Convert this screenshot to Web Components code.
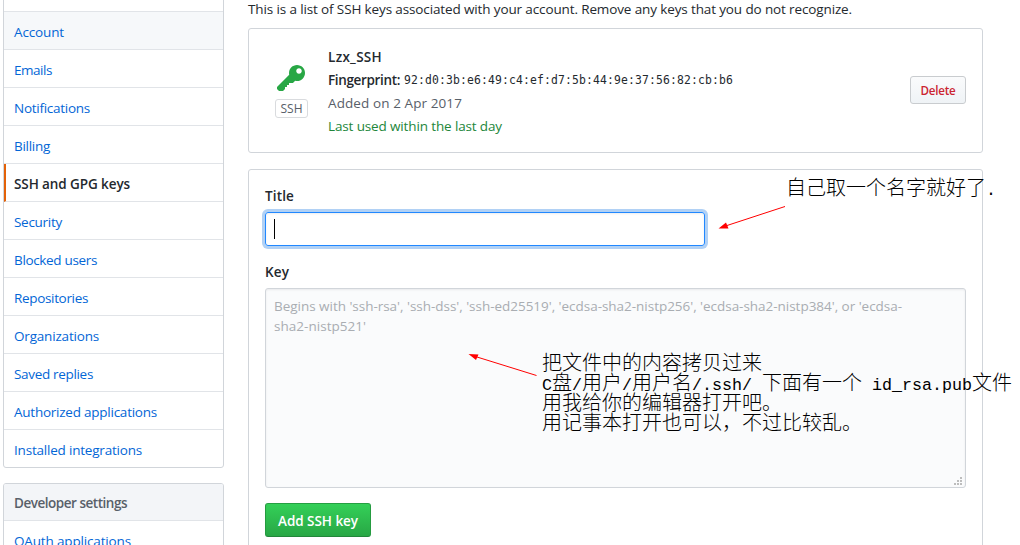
<!DOCTYPE html>
<html lang="en">
<head>
<meta charset="utf-8">
<title>SSH and GPG keys</title>
<style>
html, body { margin: 0; width: 1020px; height: 545px; overflow: hidden; background: #fff; }
body { font: 13.5px/21px "Open Sans", "Noto Sans", "Noto Sans CJK SC", sans-serif; color: #24292e; }
</style>
</head>
<body>
<settings-page></settings-page>
<script>
function define(name, html, Base = HTMLElement) {
  customElements.define(name, class extends Base {
    constructor() {
      super();
      this.attachShadow({ mode: 'open' }).innerHTML = html;
    }
  });
}

/* A run of text whose tracking is adjusted to reach a set width. */
class FitBase extends HTMLElement {
  connectedCallback() {
    requestAnimationFrame(() => this.fit());
    this.fit();
  }
  fit() {
    const w = parseFloat(this.getAttribute('w'));
    if (!w) return;
    this.style.letterSpacing = '0px';
    const natural = this.getBoundingClientRect().width;
    if (natural) this.style.letterSpacing = (w - natural) / this.textContent.length + 'px';
  }
}
define('text-run', `<style>:host{display:inline-block;white-space:nowrap;vertical-align:top}</style><slot></slot>`, FitBase);

define('nav-item', `
<style>
:host{display:flex;box-sizing:border-box;height:38px;align-items:center;padding:3px 10px 0;border-bottom:1px solid #e1e4e8;color:#0366d6}
:host(:last-child){border-bottom:0;height:37px}
:host([hover]){background:#f6f8fa}
:host([selected]){border-left:2px solid #e36209;padding-left:8px;color:#24292e;font-weight:600}
:host([heading]){height:37px;background:#f3f5f8;color:#586069;font-weight:600}
</style><slot></slot>`);

define('nav-menu', `
<style>:host{display:block;border:1px solid #d1d5da;border-radius:3px;overflow:hidden}</style>
<slot></slot>`);

define('box-card', `
<style>:host{display:block;box-sizing:border-box;border:1px solid #d1d5da;border-radius:3px}</style>
<slot></slot>`);

define('push-button', `
<style>
:host{display:flex;box-sizing:border-box;align-items:center;justify-content:center;font-weight:600;border-radius:3px;border:1px solid #c9cccf}
:host([danger]){width:56px;height:28px;color:#cb2431;font-size:11.6px;background:linear-gradient(#fafbfc,#eff3f6)}
:host([primary]){width:106px;height:34px;padding-top:3px;color:#fff;border-color:#269f42 #259b40 #22863a;background:linear-gradient(#34d058,#28a745)}
</style><slot></slot>`);

define('key-icon', `
<style>:host{display:block;width:28px;height:32px;margin-left:-2px}svg{display:block}</style>
<svg width="28" height="32" viewBox="0 0 14 16" fill="#28a745"><path fill-rule="evenodd" d="M12.83 2.17C12.08 1.42 11.14 1.03 10 1c-1.13.03-2.08.42-2.83 1.17S6.04 3.86 6.01 5c0 .3.03.59.09.89L0 12v1l1 1h2l1-1v-1h1v-1h1v-1h2l1.09-1.11c.3.08.59.11.91.11 1.14-.03 2.08-.42 2.83-1.17S13.97 6.14 14 5c-.03-1.14-.42-2.08-1.17-2.83zM11 5.38c-.77 0-1.38-.61-1.38-1.38 0-.77.61-1.38 1.38-1.38.77 0 1.38.61 1.38 1.38 0 .77-.61 1.38-1.38 1.38z"/></svg>`);

define('ssh-key-row', `
<style>
:host{display:flex;height:123px;align-items:flex-start}
.type{display:flex;flex-direction:column;align-items:center;width:33px;margin:34px 20px 0 26px}
.badge{box-sizing:border-box;width:33px;height:19px;margin-top:4px;border:1px solid #d9dbde;border-radius:3px;color:#586069;font-size:12px;line-height:18px;text-align:center}
.info{display:grid;grid-auto-rows:23px;line-height:23px;margin-top:17px;flex:1}
.mono{font-family:"DejaVu Sans Mono",monospace;font-size:11.4px}
.row{display:flex;gap:4px}
b{font-weight:600}
.muted{color:#586069}.ok{color:#22863a}
push-button{margin:47px 16px 0 0}
</style>
<div class="type"><key-icon></key-icon><div class="badge"><text-run w="22">SSH</text-run></div></div>
<div class="info">
<b><text-run w="54">Lzx_SSH</text-run></b>
<div class="row"><b><text-run w="72">Fingerprint:</text-run></b><text-run class="mono" w="329">92:d0:3b:e6:49:c4:ef:d7:5b:44:9e:37:56:82:cb:b6</text-run></div>
<div class="muted"><text-run w="134">Added on 2 Apr 2017</text-run></div>
<div class="ok"><text-run w="174">Last used within the last day</text-run></div>
</div>
<push-button danger><text-run w="35">Delete</text-run></push-button>`);

define('title-field', `
<style>
:host{display:flex;align-items:center;box-sizing:border-box;width:440px;height:34px;padding:0 8px;border:1px solid #2188ff;border-radius:3px;box-shadow:inset 0 1px 2px rgba(27,31,35,.075),0 0 0 3px #b1d1f5}
i{width:1px;height:20px;background:#000}
</style><i></i>`);

define('key-field', `
<style>
:host{display:block;position:relative;box-sizing:border-box;width:701px;height:200px;padding:7px 8px;border:1px solid #d1d5da;border-radius:3px;background:#fafbfc;box-shadow:inset 0 1px 2px rgba(27,31,35,.075);color:#a9adb2;line-height:20px}
svg{position:absolute;right:3px;bottom:2px}
</style>
<slot></slot>
<svg width="8" height="8" fill="#bdbdbd" shape-rendering="crispEdges"><path d="M6 0h2v2H6zM3 3h2v2H3zM6 3h2v2H6zM0 6h2v2H0zM3 6h2v2H3zM6 6h2v2H6z"/></svg>`);

define('key-form', `
<style>
:host{display:flex;flex-direction:column;padding:16px;height:420px}
label{display:block;font-weight:600;height:21px}
.title{margin-bottom:5px}
.key{margin:16px 0 5px}
key-field{margin-bottom:15px}
key-field div{height:20px}
</style>
<label class="title"><text-run w="29">Title</text-run></label>
<title-field></title-field>
<label class="key"><text-run w="24">Key</text-run></label>
<key-field><div><text-run w="628">Begins with 'ssh-rsa', 'ssh-dss', 'ssh-ed25519', 'ecdsa-sha2-nistp256', 'ecdsa-sha2-nistp384', or 'ecdsa-</text-run></div><div><text-run w="92">sha2-nistp521'</text-run></div></key-field>
<push-button primary><text-run w="80">Add SSH key</text-run></push-button>`);

/* Notes and arrows laid over the page. */
define('page-notes', `
<style>
:host{position:absolute;left:0;top:0;width:1020px;height:545px;pointer-events:none;color:#000;font:300 20px/20px "Liberation Mono","Noto Sans CJK SC",monospace}
svg{position:absolute;left:0;top:0}
.note{position:absolute;white-space:pre}
.note div{height:20px}
.a{left:786px;top:180px}.b{left:542px;top:355px}
.l{font-size:16.66px;line-height:0}
</style>
<svg width="1020" height="545" stroke="#f00" fill="#f00"><path d="M785 206.500L727 225.500M536.500 375.500L477 357" fill="none"/><path d="M718.500 228.500L726 222.500 728.500 228.500zM468.500 354L478.500 354.500 476 360z" stroke="none"/></svg>
<div class="note a"><div>自己取一个名字就好了<span class="l">.</span></div></div>
<div class="note b"><div>把文件中的内容拷贝过来</div><div><span class="l">C</span>盘<span class="l">/</span>用户<span class="l">/</span>用户名<span class="l">/.ssh/ </span>下面有一个<span class="l"> id_rsa.pub</span>文件</div><div>用我给你的编辑器打开吧。</div><div>用记事本打开也可以，不过比较乱。</div></div>`);

define('settings-page', `
<style>
:host{display:grid;position:relative;grid-template-columns:221px 735px;column-gap:24px;padding-left:3px;width:1020px;height:545px;box-sizing:border-box;overflow:hidden}
aside{display:flex;flex-direction:column;gap:15px;margin-top:-27px}
main{display:flex;flex-direction:column}
.intro{height:28px;line-height:19px}
.keys{height:125px;margin-bottom:16px}
.form{height:420px}
</style>
<aside>
<nav-menu>
<nav-item></nav-item>
<nav-item hover><text-run w="50">Account</text-run></nav-item>
<nav-item><text-run w="38">Emails</text-run></nav-item>
<nav-item><text-run w="76">Notifications</text-run></nav-item>
<nav-item><text-run w="36">Billing</text-run></nav-item>
<nav-item selected><text-run w="116">SSH and GPG keys</text-run></nav-item>
<nav-item><text-run w="48">Security</text-run></nav-item>
<nav-item><text-run w="83">Blocked users</text-run></nav-item>
<nav-item><text-run w="74">Repositories</text-run></nav-item>
<nav-item><text-run w="85">Organizations</text-run></nav-item>
<nav-item><text-run w="79">Saved replies</text-run></nav-item>
<nav-item><text-run w="143">Authorized applications</text-run></nav-item>
<nav-item><text-run w="128">Installed integrations</text-run></nav-item>
</nav-menu>
<nav-menu>
<nav-item heading><text-run w="113">Developer settings</text-run></nav-item>
<nav-item><text-run w="117">OAuth applications</text-run></nav-item>
</nav-menu>
</aside>
<main>
<div class="intro"><text-run w="604">This is a list of SSH keys associated with your account. Remove any keys that you do not recognize.</text-run></div>
<box-card class="keys"><ssh-key-row></ssh-key-row></box-card>
<box-card class="form"><key-form></key-form></box-card>
</main>
<page-notes></page-notes>`);
</script>
</body>
</html>
